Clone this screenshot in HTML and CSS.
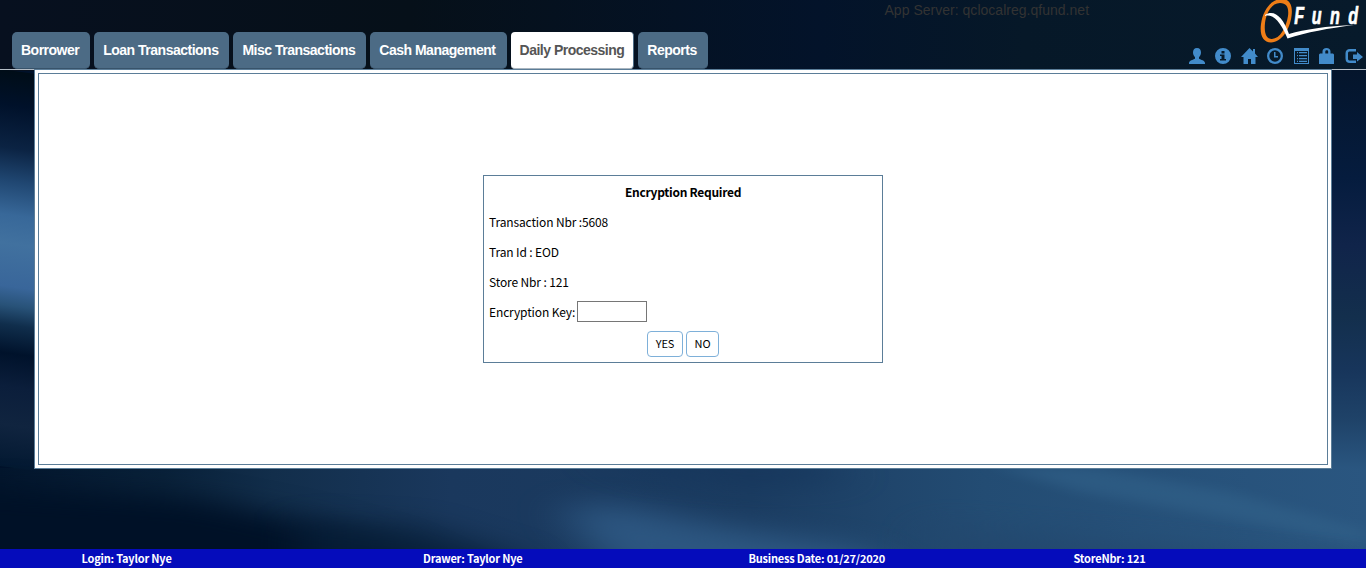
FILE: index.html
```html
<!DOCTYPE html>
<html lang="en">
<head>
<meta charset="utf-8">
<title>QFund</title>
<link rel="stylesheet" href="styles.css">
</head>
<body>
<svg class="backdrop" viewBox="0 0 1366 568" preserveAspectRatio="none" aria-hidden="true">
  <defs>
    <linearGradient id="top"><stop offset="0" stop-color="#07101f"/><stop offset=".3" stop-color="#061019"/><stop offset=".6" stop-color="#03132a"/><stop offset=".75" stop-color="#061828"/><stop offset="1" stop-color="#071a2b"/></linearGradient>
    <linearGradient id="left" gradientUnits="userSpaceOnUse" x1="0" y1="70" x2="0" y2="548">
      <stop offset="0" stop-color="#000d18"/><stop offset=".07" stop-color="#00112a"/><stop offset=".16" stop-color="#0b2343"/><stop offset=".23" stop-color="#204772"/><stop offset=".3" stop-color="#386899"/><stop offset=".36" stop-color="#41719f"/><stop offset=".45" stop-color="#39669a"/><stop offset=".49" stop-color="#285278"/><stop offset=".53" stop-color="#102e4c"/><stop offset=".59" stop-color="#00122b"/><stop offset=".66" stop-color="#0b1e3b"/><stop offset=".74" stop-color="#10243f"/><stop offset=".82" stop-color="#041a33"/><stop offset=".88" stop-color="#001126"/><stop offset="1" stop-color="#000f1f"/>
    </linearGradient>
    <linearGradient id="right" x2="0" y2="1">
      <stop offset="0" stop-color="#04152c"/><stop offset=".27" stop-color="#051c3e"/><stop offset=".44" stop-color="#10244a"/><stop offset=".62" stop-color="#132f4d"/><stop offset=".75" stop-color="#17355b"/><stop offset=".88" stop-color="#1f4369"/><stop offset="1" stop-color="#2a5680"/>
    </linearGradient>
    <linearGradient id="low"><stop offset="0" stop-color="#03162d"/><stop offset=".12" stop-color="#092139"/><stop offset=".2" stop-color="#122e4b"/><stop offset=".33" stop-color="#1a385d"/><stop offset=".55" stop-color="#1b3c61"/><stop offset=".72" stop-color="#234c73"/><stop offset="1" stop-color="#2a5680"/></linearGradient>
    <filter id="soft" x="-20%" y="-80%" width="140%" height="260%" color-interpolation-filters="sRGB"><feGaussianBlur stdDeviation="24 13"/></filter>
    <filter id="fine" x="-20%" y="-50%" width="140%" height="200%" color-interpolation-filters="sRGB"><feGaussianBlur stdDeviation="9 6"/></filter>
  </defs>
  <rect width="1366" height="71" fill="url(#top)"/>
  <rect y="468" width="1366" height="100" fill="url(#low)"/>
  <rect x="1331" y="70" width="35" height="399" fill="url(#right)"/>
  <g transform="skewY(8)"><rect y="69" width="36" height="397" fill="url(#left)"/></g>
  <path d="M-80 485 70 492 200 500 300 520 390 545 500 600H-80z" fill="#001127" filter="url(#soft)"/>
  <path d="M560 505 620 505 700 522 860 548 930 590H640L590 545z" fill="#315d89" opacity=".8" filter="url(#soft)"/>
  <path d="M590 455 820 462 850 480 760 485 650 475z" fill="#14345a" opacity=".7" filter="url(#soft)"/>
  <path d="M300 520 420 525 530 560 500 590H300z" fill="#071f39" opacity=".8" filter="url(#soft)"/>
  <path d="M990 465 1090 467 1230 492 1366 530V544L1220 517 1080 492z" fill="#34658d" opacity=".5" filter="url(#fine)"/>
  <path d="M930 525 1100 540 1366 565V590H930z" fill="#23466c" opacity=".6" filter="url(#soft)"/>
</svg>
<div class="page">
  <header class="header">
    <nav class="tabs">
      <a class="tab">Borrower</a><a class="tab">Loan Transactions</a><a class="tab">Misc Transactions</a><a class="tab">Cash Management</a><a class="tab active">Daily Processing</a><a class="tab">Reports</a>
    </nav>
    <div class="server">App Server: qclocalreg.qfund.net</div>
    <div class="brand">
      <svg class="logo" width="106" height="44" viewBox="0 0 106 44">
        <path fill="#ee7d17" fill-rule="evenodd" d="M22-1C30-1 33 6 31.500 16 30 29 22 42 11 42.500 3 42.500-.5 35 1 24 3 10 11-1 22-1zM20 3C12 3 6.500 12 5 23 4 33 6 39 12 39 20 38.500 26 28 28 16 29 8 27 3 20 3z"/>
        <path fill="#fff" d="M5 15C14 9 23 17 29 34 45 29.500 66 26 94 25 68 28.500 47 32 27.500 38.500 22 25 14 13 5 16z"/>
        <text class="logo-text" transform="translate(34.300 24) scale(.7 1)" x="0 25 51 77">Fund</text>
      </svg>
      <div class="icons">
        <svg viewBox="0 0 16 16"><path d="M8 0c2.800 0 4 1.800 4 4.500C12 7 11 8 10 9.200v1.500c1.800 1 6 1.800 6 4.300v1H0v-1c0-2.500 4.200-3.300 6-4.300V9.200C5 8 4 7 4 4.500 4 1.800 5.200 0 8 0z"/></svg>
        <svg viewBox="0 0 16 16"><path fill-rule="evenodd" d="M8 0a8 8 0 1 0 0 16A8 8 0 0 0 8 0zM6.500 3h3v2.500h-3zM5 6.500h4.500V11H11v1.500H5V11h1.500V8H5z"/></svg>
        <svg class="home" viewBox="0 0 17 16"><path d="M8.500 0 12 3.500V1h2v4.500L17 9h-2.500v7H10v-5H7v5H2.500V9H0z"/></svg>
        <svg viewBox="0 0 16 16"><path fill-rule="evenodd" d="M8 0a8 8 0 1 0 0 16A8 8 0 0 0 8 0zm0 2.300a5.700 5.700 0 1 1 0 11.400A5.700 5.700 0 0 1 8 2.300zM7 4h1.500v4H11v1.500H7z"/></svg>
        <svg viewBox="0 0 16 16"><path fill-rule="evenodd" d="M1 0h15v16H1zM2 3v12h13V3zM4 4h1v1.300H4zm2 0h8v1.300H6zM4 7h1v1.300H4zm2 0h8v1.300H6zM4 10h1v1.300H4zm2 0h8v1.300H6zM4 12.700h1V14H4zm2 0h8V14H6z"/></svg>
        <svg viewBox="0 0 16 16"><path fill-rule="evenodd" d="M3.500 5.500V3.500C3.500 1.500 5 0 7.500 0s4 1.500 4 3.500v2H14l1 1V16H0V6.500l1-1zm2.800 0h2.900v-2c0-1.700-2.900-1.700-2.900 0z"/></svg>
        <svg class="exit" viewBox="0 0 18 16"><path d="M11 1v2.500H5C3.500 3.500 3 4 3 5.500v5C3 12 3.500 12.500 5 12.500h6V15H5c-3 0-4.500-1.500-4.500-4.500v-5C.5 2.500 2 1 5 1zM12 4l6 5-6 4.500V11H8V6.500h4z"/></svg>
      </div>
    </div>
  </header>
  <main class="frame">
    <div class="content">
      <form class="dialog">
        <h1 class="title">Encryption Required</h1>
        <p class="row">Transaction Nbr :5608</p>
        <p class="row">Tran Id : EOD</p>
        <p class="row">Store Nbr : 121</p>
        <label class="row">Encryption Key:<input class="key" type="text"></label>
        <div class="actions"><button class="btn yes" type="button">YES</button><button class="btn no" type="button">NO</button></div>
      </form>
    </div>
  </main>
  <footer class="status"><span class="s1">Login: Taylor Nye</span><span class="s2">Drawer: Taylor Nye</span><span class="s3">Business Date: 01/27/2020</span><span class="s4">StoreNbr: 121</span></footer>
</div>
</body>
</html>
```
FILE: styles.css
```css
* { box-sizing: border-box; }
body { margin: 0; background: #00112a; overflow: hidden; font-family: "Noto Sans CJK SC", "Noto Sans", sans-serif; }
.backdrop { position: absolute; inset: 0; width: 1366px; height: 568px; }
.page { position: relative; display: flex; flex-direction: column; height: 568px; }
.header { display: flex; height: 70px; border-bottom: 1px solid #b4bdc6; font-family: "Liberation Sans", Arial, sans-serif; }
.tabs { display: flex; gap: 4px; padding: 32px 0 0 12px; width: 884px; flex: none; }
.tab { height: 37px; padding: 0 11px 0 9px; line-height: 36px; border-radius: 5px; background: #4c6b85; border-bottom: 1px solid #38536a; color: #fff; font-size: 14px; font-weight: bold; letter-spacing: -.5px; white-space: nowrap; }
.tab.active { padding-right: 9px; background: #fff; color: #555; border-right: 1px solid #4c6b85; border-bottom-color: #a9b5bf; border-radius: 4px; }
.server { width: 304px; flex: none; color: #333; font-size: 14px; line-height: 16px; padding: 2px 0 0 .5px; letter-spacing: .02px; }
.brand { display: flex; flex-direction: column; flex: 1; }
.logo { display: block; align-self: flex-end; flex: none; }
.logo-text { fill: #fff; stroke: #fff; stroke-width: .7px; font: italic bold 23px "Liberation Sans", Arial, sans-serif; }
.icons { display: flex; gap: 10px; padding: 4px 0 0 1px; }
.icons svg { width: 16px; height: 16px; flex: none; fill: #428bca; }
.icons .home { width: 17px; margin-right: -1px; }
.icons .exit { width: 18px; margin-left: -.5px; }
.frame { flex: none; margin: -1px 0 0 34px; width: 1298px; height: 400px; padding: 3px; background: #fff; border: 1px solid #5b7d98; }
.content { height: 392px; border: 1px solid #5b7d98; padding: 101px 0 0 444px; }
.dialog { width: 400px; height: 188px; border: 1px solid #5b7d98; padding: 2px 5px; color: #000; font-size: 12px; letter-spacing: -.13px; }
.title { margin: 0; font-size: 12px; line-height: 28px; height: 30px; text-align: center; letter-spacing: -.28px; }
.row { display: flex; align-items: flex-start; margin: 0; height: 30px; line-height: 28px; white-space: pre; }
.key { width: 70px; height: 21px; margin: 3px 0 0 2px; border: 1px solid #767676; padding: 0; }
.actions { display: flex; justify-content: center; gap: 3px; padding-top: 3px; }
.btn { height: 26px; padding: 0 0 2px; border: 1px solid #7eb0d9; border-radius: 4px; background: #fff; color: #000; font: 11px "Noto Sans CJK SC", sans-serif; letter-spacing: -.1px; }
.yes { width: 36px; }
.no { width: 33px; }
.status { display: flex; height: 19px; margin-top: auto; background: #050cbb; color: #fff; font-size: 11px; font-weight: bold; line-height: 19px; letter-spacing: -.2px; white-space: nowrap; padding-left: 81.500px; }
.s1 { width: 341.500px; }
.s2 { width: 325.500px; }
.s3 { width: 325px; }
```
